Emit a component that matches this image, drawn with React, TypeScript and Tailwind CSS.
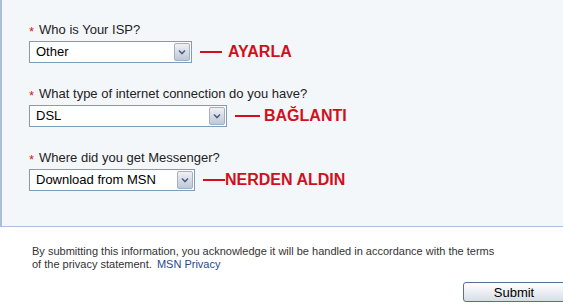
import React from 'react';

const Chevron = () => (
  <svg width="8" height="6" viewBox="0 0 8 6">
    <path d="M1 1.5 L4 4.5 L7 1.5" fill="none" stroke="#4d6185" strokeWidth="1.6" />
  </svg>
);

const FakeSelect: React.FC<{ value: string; width: string }> = ({ value, width }) => (
  <div className={`flex h-[22px] ${width} items-stretch border border-[#7f9db9] bg-white p-[1px]`}>
    <div className="flex flex-1 items-center pl-[5px] text-[13px] text-black">{value}</div>
    <div className="flex w-[16px] items-center justify-center rounded-[2px] border border-[#a3b0c4] bg-gradient-to-b from-[#eef1f6] to-[#bfc8d6]">
      <Chevron />
    </div>
  </div>
);

const Field: React.FC<{
  label: string;
  value: string;
  width: string;
  line: string;
  gap: string;
  note: string;
}> = ({ label, value, width, line, gap, note }) => (
  <div className="flex flex-col">
    <div className="flex h-[14px] items-center text-[13px] text-[#222]">
      <span className="mr-[5px] pt-[3px] text-[#d02030]">*</span>
      {label}
    </div>
    <div className="mt-[4px] flex h-[22px] items-center">
      <FakeSelect value={value} width={width} />
      <div className={`ml-[8px] h-[2px] ${line} bg-[#d0101c]`} />
      <span className={`${gap} text-[16px] leading-[22px] font-bold text-[#d0101c]`}>{note}</span>
    </div>
  </div>
);

export default function App() {
  return (
    <div className="h-[307px] w-[563px] overflow-hidden bg-white" style={{ fontFamily: '"Liberation Sans", Arial, sans-serif' }}>
      <div className="flex h-[227px] flex-col gap-[24px] border-b border-l-2 border-[#a9c0d6] bg-[#f4f7fa] pl-[27px] pt-[23px]">
        <Field label="Who is Your ISP?" value="Other" width="w-[163px]" line="w-[22px]" gap="ml-[6px]" note="AYARLA" />
        <Field label="What type of internet connection do you have?" value="DSL" width="w-[198px]" line="w-[25px]" gap="ml-[4px]" note="BAĞLANTI" />
        <Field label="Where did you get Messenger?" value="Download from MSN" width="w-[166px]" line="w-[22px]" gap="ml-0" note="NERDEN ALDIN" />
      </div>
      <div className="pl-[32px] pt-[18px] text-[11px] leading-[13px] text-[#333]">
        <p>By submitting this information, you acknowledge it will be handled in accordance with the terms</p>
        <p>
          of the privacy statement. <span className="ml-[2px] text-[#1d4a8c]">MSN Privacy</span>
        </p>
      </div>
      <div className="mt-[11px] flex pl-[463px]">
        <button className="h-[20px] w-[104px] shrink-0 rounded-[3px] border border-[#5a6f8c] bg-gradient-to-b from-white to-[#d8dde6] pr-[2px] text-[13px] text-black">
          Submit
        </button>
      </div>
    </div>
  );
}
